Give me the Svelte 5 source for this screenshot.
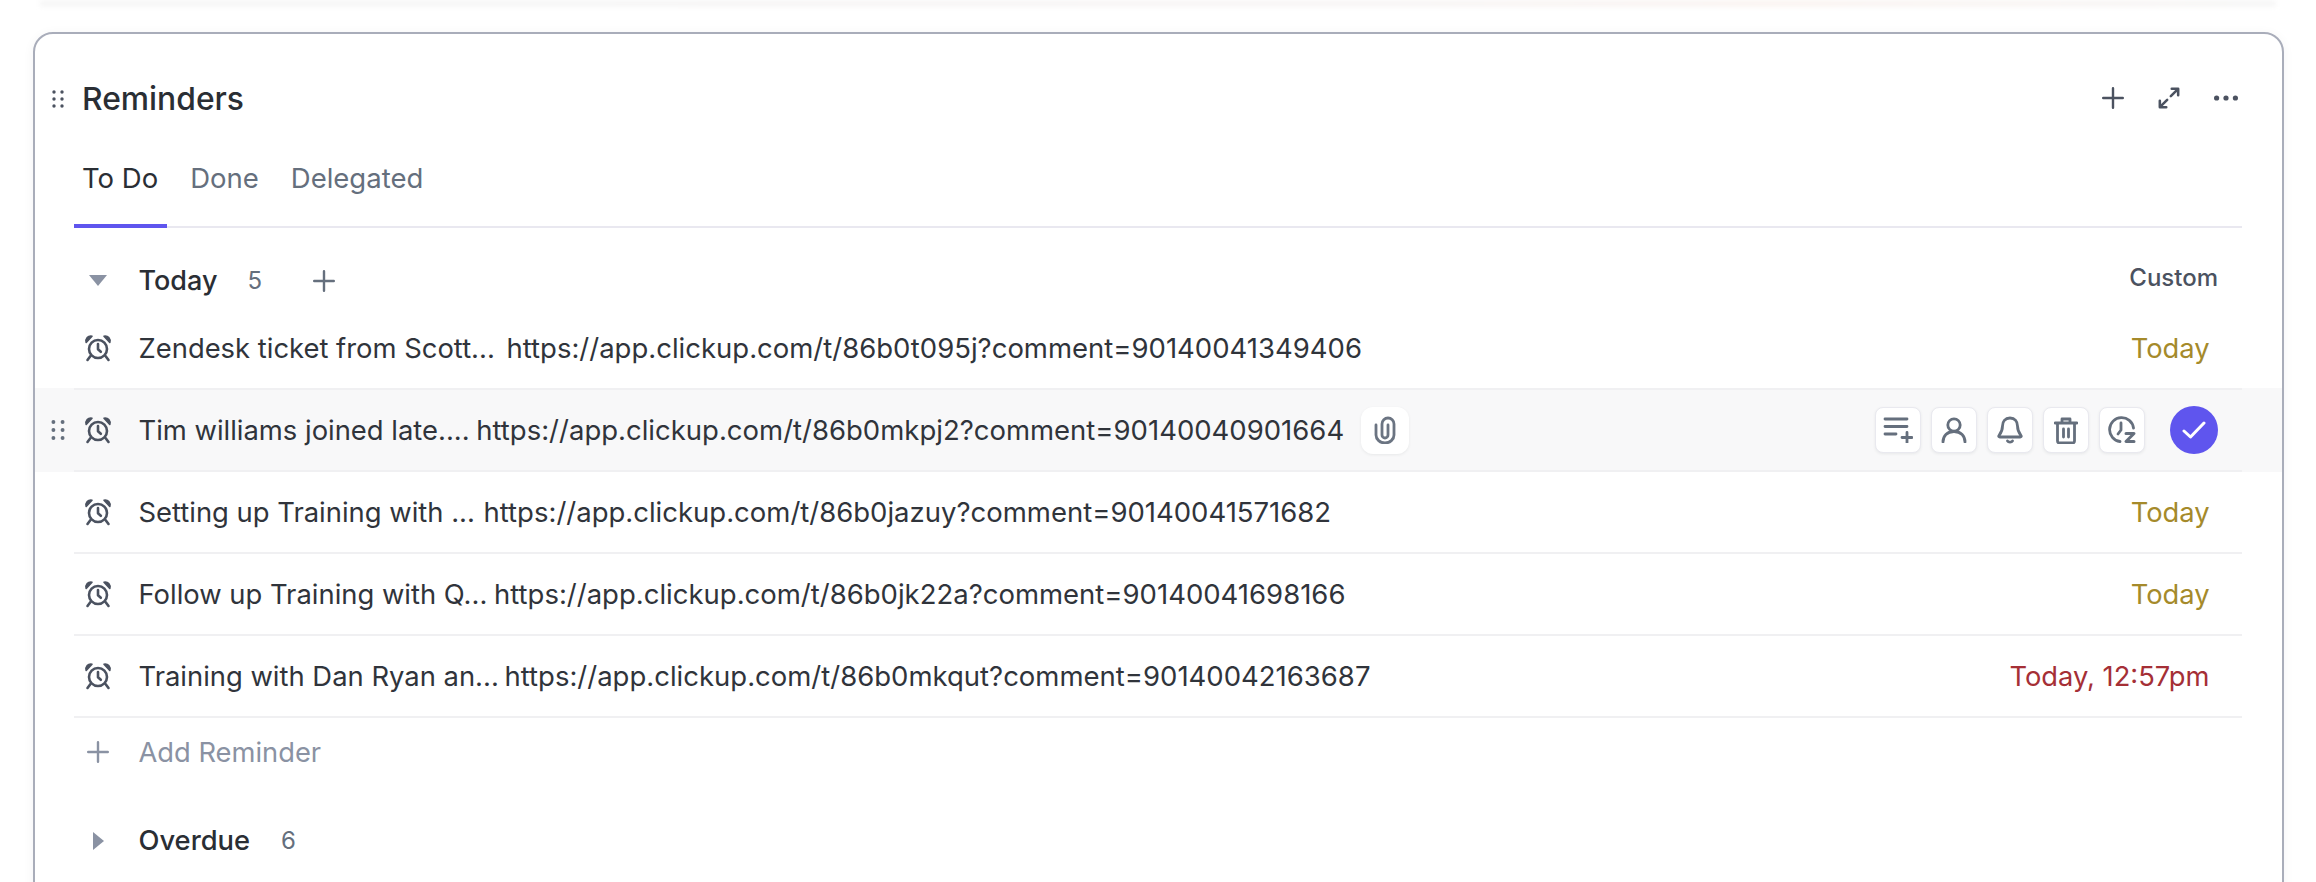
<script lang="ts">
  const rows = [
    { title: "Zendesk ticket from Scott...", url: "https://app.clickup.com/t/86b0t095j?comment=90140041349406", gap: 4, date: "Today" },
    { title: "Tim williams joined late....", url: "https://app.clickup.com/t/86b0mkpj2?comment=90140040901664", gap: -1, hover: true },
    { title: "Setting up Training with ...", url: "https://app.clickup.com/t/86b0jazuy?comment=90140041571682", gap: 1, date: "Today" },
    { title: "Follow up Training with Q...", url: "https://app.clickup.com/t/86b0jk22a?comment=90140041698166", gap: -1, date: "Today" },
    { title: "Training with Dan Ryan an...", url: "https://app.clickup.com/t/86b0mkqut?comment=90140042163687", gap: -2, date: "Today, 12:57pm", late: true },
  ];
</script>

{#snippet grip()}
  <svg class="grip" width="12" height="18" viewBox="0 0 12 18">
    <circle cx="2" cy="2" r="1.7" /><circle cx="10" cy="2" r="1.7" />
    <circle cx="2" cy="9" r="1.7" /><circle cx="10" cy="9" r="1.7" />
    <circle cx="2" cy="16" r="1.7" /><circle cx="10" cy="16" r="1.7" />
  </svg>
{/snippet}

{#snippet plus(size, color)}
  <svg width={size} height={size} viewBox="0 0 22 22" fill="none" stroke={color} stroke-width="2.4" stroke-linecap="round">
    <path d="M11 1.200v19.600M1.200 11h19.600" />
  </svg>
{/snippet}

{#snippet alarm()}
  <svg class="alarm" width="28" height="28" viewBox="0 0 28 28" fill="none" stroke="#4b5260" stroke-width="2.6" stroke-linecap="round" stroke-linejoin="round">
    <circle cx="14" cy="15" r="9" />
    <path d="M14 10v5.200l2.800 2.600" />
    <path d="M2.200 8.500C1.200 4.500 4 1.500 8 2.200z" fill="#4b5260" stroke-width="1.600" />
    <path d="M25.800 8.500C26.800 4.500 24 1.500 20 2.200z" fill="#4b5260" stroke-width="1.600" />
    <path d="M6.500 22 3.500 26M21.500 22 24.500 26" />
  </svg>
{/snippet}

<div class="page">
  <div class="topbar"></div>
  <section class="card">
    <header class="head">
      <div class="name">
        {@render grip()}
        <h2>Reminders</h2>
      </div>
      <div class="tools">
        {@render plus(22, "#4b5260")}
        <svg width="22" height="22" viewBox="0 0 24 24" fill="none" stroke="#4b5260" stroke-width="2.800" stroke-linecap="round" stroke-linejoin="round">
          <path d="M14 10l8-8M15 2h7v7M10 14l-8 8M2 15v7h7" />
        </svg>
        <svg width="24" height="6" viewBox="0 0 24 6" fill="#4b5260">
          <circle cx="2.600" cy="3" r="2.600" /><circle cx="12" cy="3" r="2.600" /><circle cx="21.400" cy="3" r="2.600" />
        </svg>
      </div>
    </header>

    <nav class="tabs">
      <span class="tab active">To Do</span>
      <span class="tab">Done</span>
      <span class="tab">Delegated</span>
    </nav>

    <div class="group-head">
      <span class="slot"><i class="caret down"></i></span>
      <span class="group-name">Today</span>
      <span class="count">5</span>
      <span class="group-add">{@render plus(22, "#656f7d")}</span>
      <span class="custom">Custom</span>
    </div>

    <ul class="list">
      {#each rows as row}
        <li class={["row", row.hover && "hover"]}>
          <div class="row-in">
            {#if row.hover}<span class="row-grip">{@render grip()}</span>{/if}
            <span class="slot">{@render alarm()}</span>
            <span class="text">{row.title} <span class="url" style:margin-left={`${row.gap}px`}>{row.url}</span></span>
            {#if row.hover}
              <span class="btn clip">
                <svg width="24" height="28" viewBox="0 0 24 28" fill="none" stroke="#6b7482" stroke-width="2.800" stroke-linecap="round">
                  <path d="M3 9v10a9 8 0 0 0 18 0V8a6 6 0 0 0-12 0v11a3 3 0 0 0 6 0V9" />
                </svg>
              </span>
              <div class="actions">
                <span class="btn">
                  <svg width="30" height="26" viewBox="0 0 30 26" fill="none" stroke="#656f7d" stroke-width="2.800" stroke-linecap="round">
                    <path d="M2 2h22M2 9.500h22M2 17h11M24 15.500v10M19 20.500h10" />
                  </svg>
                </span>
                <span class="btn">
                  <svg width="26" height="26" viewBox="0 0 26 26" fill="none" stroke="#656f7d" stroke-width="2.800" stroke-linecap="round">
                    <circle cx="13" cy="8" r="6.200" />
                    <path d="M2 25c0-6 4-10.500 11-10.500S24 19 24 25" />
                  </svg>
                </span>
                <span class="btn">
                  <svg width="26" height="28" viewBox="0 0 26 28" fill="none" stroke="#656f7d" stroke-width="2.800" stroke-linecap="round" stroke-linejoin="round">
                    <path d="M13 2c-5 0-7.500 3.500-7.500 8 0 5-1.500 7-3.500 9.500-.6.8-.1 1.500.8 1.500h20.400c.9 0 1.400-.7.800-1.500-2-2.500-3.500-4.500-3.500-9.500 0-4.500-2.500-8-7.500-8z" />
                    <path d="M10.500 25c1 1.500 4 1.500 5 0" />
                  </svg>
                </span>
                <span class="btn">
                  <svg width="24" height="27" viewBox="0 0 24 27" fill="none" stroke="#656f7d" stroke-width="2.800" stroke-linecap="round" stroke-linejoin="round">
                    <path d="M1 6h22M8 6V2h8v4M3.500 6v18a2 2 0 0 0 2 2h13a2 2 0 0 0 2-2V6M9.500 12v8M14.500 12v8" />
                  </svg>
                </span>
                <span class="btn">
                  <svg width="28" height="28" viewBox="0 0 28 28" fill="none" stroke="#656f7d" stroke-width="2.800" stroke-linecap="round" stroke-linejoin="round">
                    <path d="M25.500 12A12 12 0 1 0 12 25.500" />
                    <path d="M13 7v7l-3 4" />
                    <path d="M18 17.500h8l-8 8h8" stroke-width="3" />
                  </svg>
                </span>
              </div>
              <span class="done">
                <svg width="24" height="18" viewBox="0 0 24 18" fill="none" stroke="#fff" stroke-width="3" stroke-linecap="round" stroke-linejoin="round">
                  <path d="M2 10l6.500 6L22 2" />
                </svg>
              </span>
            {:else}
              <span class={["date", row.late && "late"]}>{row.date}</span>
            {/if}
          </div>
        </li>
      {/each}
    </ul>

    <div class="add">
      <span class="slot">{@render plus(22, "#8a92a3")}</span>
      <span>Add Reminder</span>
    </div>

    <div class="group-head overdue">
      <span class="slot"><i class="caret right"></i></span>
      <span class="group-name">Overdue</span>
      <span class="count">6</span>
    </div>
  </section>
</div>

<style>
  :global(body) {
    background: #fff;
    overflow: hidden;
  }

  .page {
    height: 882px;
    overflow: hidden;
    font-family: Inter, "Noto Sans", sans-serif;
    color: #2a2e34;
  }

  .topbar {
    height: 7px;
    margin: 0 40px;
    background: linear-gradient(90deg, #f7f7f7 0%, #f8f6f6 60%, #fbf5f2 78%, #f7f7f7 100%);
    filter: blur(2px);
  }

  .card {
    margin: 25px 32px 0 33px;
    height: 900px;
    border: 2px solid #a9adba;
    border-radius: 20px;
    background: #fff;
    box-shadow: 0 2px 12px rgba(42, 46, 52, 0.05);
  }

  .head {
    display: flex;
    align-items: center;
    justify-content: space-between;
    height: 48px;
    margin-top: 41px;
    padding: 0 44px 0 17px;
  }

  .name {
    display: flex;
    align-items: center;
    gap: 18px;
  }

  h2 {
    margin: 0;
    font-size: 31.800px;
    font-weight: 500;
    line-height: 48px;
  }

  .grip {
    fill: #4b5260;
    display: block;
  }

  .tools {
    display: flex;
    align-items: center;
    gap: 34px;
    margin-top: -2px;
  }

  .tabs {
    display: flex;
    gap: 15px;
    margin: 32px 40px 0 39px;
    height: 73px;
    border-bottom: 2px solid #e9e8f0;
    box-sizing: border-box;
  }

  .tab {
    height: 73px;
    padding: 0 9px 0 8px;
    box-sizing: border-box;
    font-size: 27.500px;
    line-height: 46px;
    color: #656f7d;
  }

  .tab.active {
    color: #2a2e34;
    border-bottom: 4px solid #5f55ee;
  }

  .group-head {
    display: flex;
    align-items: center;
    height: 80px;
    box-sizing: border-box;
    padding: 25px 40px 0 39px;
    font-size: 27px;
  }

  .slot {
    display: flex;
    align-items: center;
    justify-content: center;
    width: 48px;
    margin-right: 16.500px;
    flex: none;
  }

  .caret {
    display: block;
    width: 0;
    height: 0;
  }

  .caret.down {
    border-left: 9px solid transparent;
    border-right: 9px solid transparent;
    border-top: 11px solid #8a92a3;
  }

  .caret.right {
    border-top: 9px solid transparent;
    border-bottom: 9px solid transparent;
    border-left: 11px solid #8a92a3;
  }

  .group-name {
    font-weight: 450;
  }

  .count {
    margin-left: 30px;
    font-size: 24px;
    color: #656f7d;
  }

  .overdue .group-name {
    font-size: 27.300px;
  }

  .overdue .count {
    margin-left: 31px;
  }

  .group-add {
    display: flex;
    margin-left: 51px;
  }

  .custom {
    margin-left: auto;
    margin-right: 24px;
    margin-bottom: 6px;
    font-size: 24px;
    font-weight: 450;
    color: #4b5260;
  }

  .list {
    list-style: none;
    margin: 0;
    padding: 0;
  }

  .row {
    height: 82px;
    box-sizing: border-box;
  }

  .row.hover {
    height: 84px;
    margin-top: -2px;
    padding-top: 2px;
    background: #f8f8f9;
  }

  .row-in {
    position: relative;
    display: flex;
    align-items: center;
    height: 82px;
    margin: 0 40px 0 39px;
    box-sizing: border-box;
    border-bottom: 2px solid #f0f0f2;
  }

  .row-grip {
    position: absolute;
    left: -22px;
    display: flex;
  }

  .row-grip .grip {
    fill: #656f7d;
    transform: scale(1.15);
  }

  .text {
    font-size: 27.400px;
    white-space: nowrap;
    color: #30343b;
  }

  .url {
    font-size: 27.500px;
  }

  .date {
    margin-left: auto;
    margin-right: 32.500px;
    font-size: 27.300px;
    color: #a58a2b;
  }

  .date.late {
    color: #a52f36;
  }

  .btn {
    display: flex;
    align-items: center;
    justify-content: center;
    width: 44px;
    height: 44px;
    border: 1px solid #e9e9ef;
    border-radius: 8px;
    background: #fff;
    box-shadow: 0 1px 3px rgba(42, 46, 52, 0.08);
  }

  .clip {
    width: 48px;
    height: 47px;
    margin-left: 17px;
    border: 0;
    border-radius: 12px;
  }

  .actions {
    display: flex;
    gap: 10px;
    margin-left: auto;
    margin-right: 25px;
  }

  .done {
    display: flex;
    align-items: center;
    justify-content: center;
    width: 48px;
    height: 48px;
    margin-right: 24px;
    border-radius: 50%;
    background: #5f55ee;
  }

  .add {
    display: flex;
    align-items: center;
    height: 68px;
    padding-left: 39px;
    font-size: 27.300px;
    color: #8a92a3;
  }

  .overdue {
    margin-top: 2px;
  }
</style>
